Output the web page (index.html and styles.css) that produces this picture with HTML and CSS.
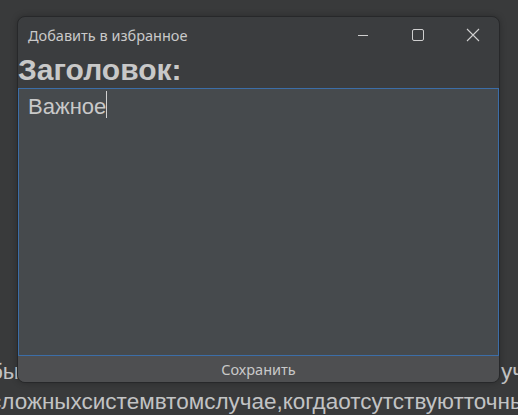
FILE: index.html
```html
<!DOCTYPE html>
<html lang="ru">
<head>
<meta charset="utf-8">
<title>Добавить в избранное</title>
<link rel="stylesheet" href="styles.css">
</head>
<body>
<div class="page-text">
  <p class="line line-1"><span class="l1-left">которых чтобы</span><span class="l1-mid"><span class="comma">,</span></span><span class="l1-right">учета</span></p>
  <p class="line line-2">сложныхсистемвтомслучае,когдаотсутствуютточные</p>
</div>
<div class="window">
  <div class="titlebar">
    <span class="title">Добавить в избранное</span>
    <div class="controls">
      <span class="ctl ctl-min"><svg width="12" height="12" viewBox="0 0 12 12"><path d="M1 6.5h10" stroke="#cfcfcf" stroke-width="1"/></svg></span>
      <span class="ctl ctl-max"><svg width="12" height="12" viewBox="0 0 12 12"><rect x="0.5" y="0.5" width="11" height="11" rx="1.5" fill="none" stroke="#cfcfcf" stroke-width="1"/></svg></span>
      <span class="ctl ctl-close"><svg width="14" height="14" viewBox="0 0 14 14"><path d="M1 1l12 12M13 1L1 13" stroke="#cfcfcf" stroke-width="1.1"/></svg></span>
    </div>
  </div>
  <div class="heading">Заголовок:</div>
  <div class="editor"><span class="value">Важное</span><span class="caret"></span></div>
  <div class="save">Сохранить</div>
</div>
</body>
</html>
```
FILE: styles.css
```css
html, body {
  margin: 0;
  padding: 0;
}
body {
  width: 518px;
  height: 415px;
  overflow: hidden;
  background: #393a3b;
  font-family: "Liberation Sans", Arial, sans-serif;
  position: relative;
  display: flex;
  flex-direction: column;
  justify-content: flex-end;
}
.page-text {
  margin-bottom: -2px;
}
.line {
  margin: 0;
  font-size: 22.5px;
  line-height: 30px;
  color: #c2c3c4;
  white-space: nowrap;
}
.line-1 {
  display: flex;
}
.l1-left {
  width: 19px;
  flex-shrink: 0;
  overflow: hidden;
  display: flex;
  justify-content: flex-end;
}
.l1-mid {
  width: 482px;
  flex-shrink: 0;
}
.comma {
  margin-left: 297px;
}
.l1-right {
  flex-shrink: 0;
}
.line-2 {
  margin-left: -10px;
}
.window {
  position: absolute;
  left: 17px;
  top: 16px;
  width: 481px;
  height: 365px;
  border: 1px solid #27282a;
  border-radius: 8px;
  background: #3b3d3f;
  overflow: hidden;
  display: flex;
  flex-direction: column;
  box-shadow: 0 0 6px rgba(0,0,0,0.25);
}
.titlebar {
  height: 35px;
  display: flex;
  align-items: center;
  justify-content: space-between;
  flex-shrink: 0;
}
.title {
  font-family: "Noto Sans", "Open Sans", sans-serif;
  font-size: 14.5px;
  color: #c9c9c9;
  padding-left: 10px;
  padding-top: 1px;
}
.controls {
  display: flex;
  align-items: center;
  height: 100%;
}
.ctl {
  display: flex;
  justify-content: center;
  align-items: center;
}
.ctl-min {
  width: 50px;
}
.ctl-max {
  width: 59px;
}
.ctl-close {
  width: 52px;
}
.heading {
  height: 36px;
  font-size: 30px;
  font-weight: bold;
  color: #c8c8c8;
  line-height: 36px;
  flex-shrink: 0;
}
.editor {
  flex: 1;
  background: #464a4d;
  border: 1px solid #3c6ea8;
  padding: 6px 9px;
  font-size: 22px;
  line-height: 23px;
  color: #c9c9c9;
  display: flex;
  align-items: flex-start;
}
.caret {
  display: inline-block;
  width: 1px;
  height: 27px;
  margin-top: -4px;
  background: #d0d0d0;
}
.save {
  height: 26px;
  flex-shrink: 0;
  background: #4e4f51;
  font-family: "Noto Sans", "Open Sans", sans-serif;
  font-size: 14.5px;
  color: #c9c9c9;
  display: flex;
  align-items: center;
  justify-content: center;
}
```
